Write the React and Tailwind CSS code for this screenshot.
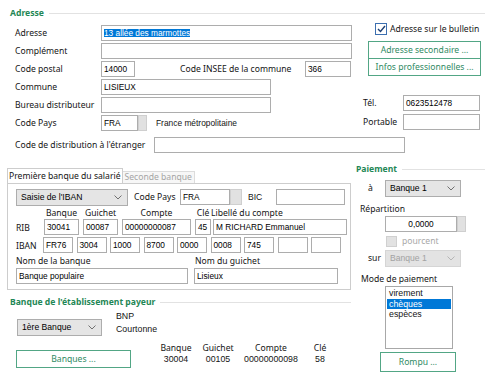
import React from 'react';

// petits composants façon formulaire Windows
const Field = ({ w, v, className = '' }) => (
  <div
    className={`h-[16px] shrink-0 border border-[#adadad] bg-white px-[2px] flex items-center font-['Liberation_Sans',Arial,sans-serif] text-[8.3px] text-black whitespace-nowrap overflow-hidden ${w} ${className}`}
  >
    {v}
  </div>
);

const Spin = ({ w = 'w-[9px]' }) => (
  <div className={`h-[16px] shrink-0 bg-[#e1e1e1] border border-[#cfcfcf] ${w}`} />
);

const Chevron = ({ color = '#606060' }) => (
  <svg width="8" height="5" viewBox="0 0 8 5" className="shrink-0">
    <polyline points="0.5,0.5 4,4 7.5,0.5" fill="none" stroke={color} strokeWidth="1" />
  </svg>
);

const Select = ({ w, v, disabled = false }) => (
  <div
    className={`h-[17px] shrink-0 border flex items-center justify-between pl-[4px] pr-[5px] font-['Liberation_Sans',Arial,sans-serif] text-[8.6px] ${w} ${
      disabled ? 'bg-[#e3e3e3] border-[#d5d5d5] text-[#a2a2a2]' : 'bg-[#e5e5e5] border-[#adadad] text-black'
    }`}
  >
    <span>{v}</span>
    <Chevron color={disabled ? '#b5b5b5' : '#707070'} />
  </div>
);

const Btn = ({ w, h = 'h-[18px]', children, className = '' }) => (
  <div
    className={`shrink-0 border border-[#52a685] bg-white flex items-center justify-center text-[#2f8a63] whitespace-nowrap ${w} ${h} ${className}`}
  >
    {children}
  </div>
);

const GroupTitle = ({ children }) => (
  <>
    <span className="font-bold text-[#1f8756] whitespace-nowrap">{children}</span>
    <div className="flex-1 h-px bg-[#e2e2e2] ml-[5px]" />
  </>
);

const Row = ({ label, lw = 'w-[86px]', children }) => (
  <div className="flex items-center h-[16px]">
    <span className={`shrink-0 whitespace-nowrap ${lw}`}>{label}</span>
    {children}
  </div>
);

const Val = ({ children }) => (
  <div className="font-['Liberation_Sans',Arial,sans-serif] text-[8.8px]">{children}</div>
);

const App = () => {
  const iban = ['FR76', '3004', '1000', '8700', '0000', '0008', '745', '', ''];

  return (
    <div className="w-[491px] h-[391px] bg-white overflow-hidden text-[8.6px] leading-none text-[#141414] font-['Noto_Sans',sans-serif]">
      {/* Adresse */}
      <div className="flex items-center h-[14px] mt-[6px] pl-[10px] pr-[6px]">
        <GroupTitle>Adresse</GroupTitle>
      </div>

      <div className="flex mt-[5px]">
        <div className="w-[363px] shrink-0 pl-[15px] flex flex-col gap-[2px]">
          <Row label="Adresse">
            <Field
              w="w-[251px]"
              v={<span className="bg-[#0078d7] text-white">13 allée des marmottes</span>}
            />
          </Row>
          <Row label="Complément">
            <Field w="w-[251px]" v="" />
          </Row>
          <Row label="Code postal">
            <Field w="w-[34px]" v="14000" />
            <span className="ml-[45px] w-[125px] shrink-0 whitespace-nowrap">Code INSEE de la commune</span>
            <Field w="w-[46px]" v="366" />
          </Row>
          <Row label="Commune">
            <Field w="w-[170px]" v="LISIEUX" />
          </Row>
          <Row label="Bureau distributeur">
            <Field w="w-[170px]" v="" />
          </Row>
          <Row label="Code Pays">
            <Field w="w-[37px]" v="FRA" />
            <Spin />
            <span className="ml-[9px] font-['Liberation_Sans',Arial,sans-serif] text-[8.4px]">France métropolitaine</span>
          </Row>
        </div>

        <div className="flex-1 flex flex-col -mt-[4px]">
          <div className="flex items-center h-[16px] pl-[12px]">
            <div className="w-[12px] h-[12px] border border-[#3c6fb0] bg-white flex items-center justify-center">
              <svg width="9" height="8" viewBox="0 0 9 8">
                <polyline points="1,4 3.5,6.5 8,1" fill="none" stroke="#1d3f73" strokeWidth="1.4" />
              </svg>
            </div>
            <span className="ml-[3px] whitespace-nowrap">Adresse sur le bulletin</span>
          </div>
          <Btn w="w-[113px]" className="ml-[5px] mt-[4px]">Adresse secondaire ...</Btn>
          <Btn w="w-[113px]" className="ml-[5px] -mt-px">Infos professionnelles ...</Btn>
          <div className="flex items-center h-[16px] mt-[19px]">
            <span className="w-[40px] shrink-0">Tél.</span>
            <Field w="w-[77px]" v="0623512478" />
          </div>
          <div className="flex items-center h-[16px] mt-[3px]">
            <span className="w-[40px] shrink-0">Portable</span>
            <Field w="w-[77px]" v="" />
          </div>
        </div>
      </div>

      <div className="flex items-center h-[16px] mt-[6px] pl-[15px]">
        <span className="w-[139px] shrink-0 whitespace-nowrap">Code de distribution à l'étranger</span>
        <Field w="w-[251px]" v="" />
      </div>

      {/* Banques */}
      <div className="flex">
        <div className="w-[356px] shrink-0 pl-[7px]">
          <div className="flex items-end mt-[16px] h-[14px]">
            <div className="h-[15px] px-[1px] border border-b-0 border-[#cdcdcd] bg-white flex items-center whitespace-nowrap relative z-10">
              Première banque du salarié
            </div>
            <div className="h-[12px] px-[2px] border border-b-0 border-l-0 border-[#dcdcdc] bg-[#f7f7f7] text-[#a5a5a5] flex items-center whitespace-nowrap">
              Seconde banque
            </div>
          </div>
          <div className="w-[344px] h-[107px] border border-[#cdcdcd] pl-[8px] pt-[5px]">
            <div className="flex items-center h-[16px]">
              <Select w="w-[112px]" v="Saisie de l'IBAN" />
              <span className="ml-[6px] w-[46px] shrink-0 whitespace-nowrap">Code Pays</span>
              <Field w="w-[50px]" v="FRA" />
              <Spin w="w-[12px]" />
              <span className="ml-[6px] w-[28px] shrink-0 font-['Liberation_Sans',Arial,sans-serif]">BIC</span>
              <Field w="w-[69px]" v="" />
            </div>

            <div className="flex items-center h-[10px] mt-[3px] whitespace-nowrap">
              <span className="w-[28px] shrink-0" />
              <span className="w-[35px] text-center">Banque</span>
              <span className="w-[35px] ml-[4px] text-center">Guichet</span>
              <span className="w-[69px] ml-[4px] text-center">Compte</span>
              <span className="w-[16px] ml-[4px] text-center">Clé</span>
              <span className="ml-[0px]">Libellé du compte</span>
            </div>

            <div className="flex items-center h-[16px] mt-[1px]">
              <span className="w-[28px] shrink-0 pt-[3px]">RIB</span>
              <Field w="w-[35px]" v="30041" />
              <Field w="w-[35px]" v="00087" className="ml-[4px]" />
              <Field w="w-[69px]" v="00000000087" className="ml-[4px]" />
              <Field w="w-[16px]" v="45" className="ml-[4px]" />
              <Field w="w-[134px]" v="M RICHARD Emmanuel" className="ml-[2px]" />
            </div>

            <div className="flex items-center h-[16px] mt-[2px]">
              <span className="w-[27px] shrink-0 pt-[3px]">IBAN</span>
              <div className="flex gap-[3.5px]">
                {iban.map((v, i) => (
                  <Field key={i} w="w-[30px]" v={v} />
                ))}
              </div>
            </div>

            <div className="flex items-center h-[12px] mt-[2px]">
              <span className="w-[179px] shrink-0">Nom de la banque</span>
              <span>Nom du guichet</span>
            </div>
            <div className="flex items-center h-[16px] mt-[1px]">
              <Field w="w-[172px]" v="Banque populaire" />
              <Field w="w-[144px]" v="Lisieux" className="ml-[6px]" />
            </div>
          </div>

          <div className="flex items-center h-[12px] mt-[6px] pl-[3px] w-[344px]">
            <GroupTitle>Banque de l'établissement payeur</GroupTitle>
          </div>

          <div className="flex items-start mt-[2px]">
            <div className="ml-[10px] mt-[9px]">
              <Select w="w-[85px]" v="1ère Banque" />
            </div>
            <div className="ml-[14px] leading-[13px]">
              <Val>BNP</Val>
              <Val>Courtonne</Val>
            </div>
          </div>

          <div className="flex items-start mt-[7px]">
            <Btn w="w-[115px]" className="ml-[9px] mt-[7px]">Banques ...</Btn>
            <div className="flex leading-[11px] ml-[25px]">
              <div className="w-[40px] text-center">
                <div>Banque</div>
                <Val>30004</Val>
              </div>
              <div className="w-[40px] ml-[2px] text-center">
                <div>Guichet</div>
                <Val>00105</Val>
              </div>
              <div className="w-[60px] ml-[3px] text-center">
                <div>Compte</div>
                <Val>00000000098</Val>
              </div>
              <div className="w-[30px] ml-[4px] text-center">
                <div>Clé</div>
                <Val>58</Val>
              </div>
            </div>
          </div>
        </div>

        {/* Paiement */}
        <div className="flex-1 flex flex-col">
          <div className="flex items-center h-[12px] mt-[10px] pr-[6px]">
            <GroupTitle>Paiement</GroupTitle>
          </div>
          <div className="flex items-center mt-[5px] pl-[12px]">
            <span className="w-[17px] shrink-0">à</span>
            <Select w="w-[76px]" v="Banque 1" />
          </div>
          <div className="flex items-center h-[12px] mt-[6px] pl-[4px]">Répartition</div>
          <div className="flex items-center mt-[1px] pl-[29px]">
            <Field w="w-[72px]" v="0,0000" className="justify-center" />
            <Spin />
          </div>
          <div className="flex items-center h-[11px] mt-[4px] pl-[30px]">
            <div className="w-[11px] h-[11px] bg-[#e2e2e2] border border-[#d0d0d0]" />
            <span className="ml-[5px] text-[#a8a8a8]">pourcent</span>
          </div>
          <div className="flex items-center mt-[3px] pl-[12px]">
            <span className="w-[17px] shrink-0">sur</span>
            <Select w="w-[76px]" v="Banque 1" disabled />
          </div>
          <div className="flex items-center h-[12px] mt-[6px] pl-[5px]">Mode de paiement</div>
          <div className="ml-[29px] mt-[1px] w-[68px] h-[63px] border border-[#a8a8a8] bg-white p-px font-['Liberation_Sans',Arial,sans-serif] text-[8.8px] leading-[10.5px]">
            <div className="px-[2px]">virement</div>
            <div className="px-[2px] bg-[#0078d7] text-white">chèques</div>
            <div className="px-[2px]">espèces</div>
          </div>
          <Btn w="w-[76px]" h="h-[20px]" className="ml-[24px] mt-[3px]">Rompu ...</Btn>
        </div>
      </div>
    </div>
  );
};

export default App;
